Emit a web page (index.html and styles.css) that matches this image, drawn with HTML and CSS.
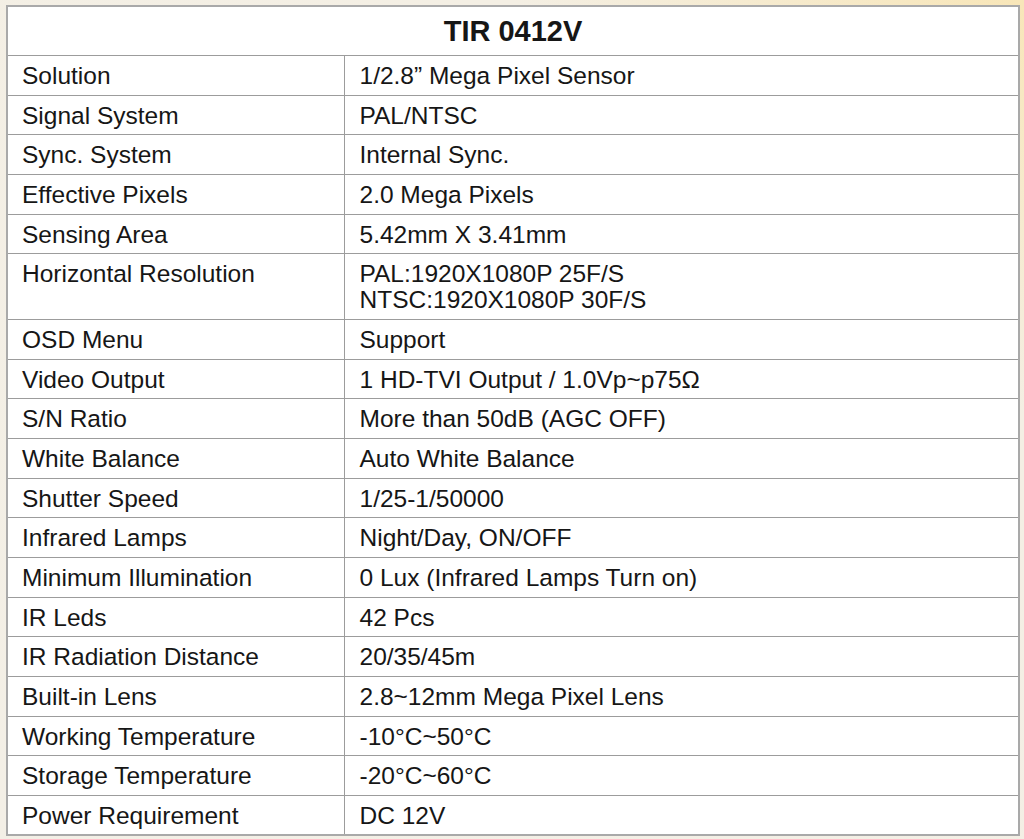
FILE: index.html
```html
<!DOCTYPE html>
<html>
<head>
<meta charset="utf-8">
<link rel="stylesheet" href="styles.css">
</head>
<body>
<div class="page">
<table class="spec">
<colgroup><col class="c-label"><col class="c-value"></colgroup>
<tr class="title-row"><th colspan="2">TIR 0412V</th></tr>
<tr><td>Solution</td><td>1/2.8” Mega Pixel Sensor</td></tr>
<tr><td>Signal System</td><td>PAL/NTSC</td></tr>
<tr><td>Sync. System</td><td>Internal Sync.</td></tr>
<tr><td>Effective Pixels</td><td>2.0 Mega Pixels</td></tr>
<tr><td>Sensing Area</td><td>5.42mm X 3.41mm</td></tr>
<tr class="double"><td>Horizontal Resolution</td><td>PAL:1920X1080P 25F/S<br>NTSC:1920X1080P 30F/S</td></tr>
<tr><td>OSD Menu</td><td>Support</td></tr>
<tr><td>Video Output</td><td>1 HD-TVI Output / 1.0Vp~p75Ω</td></tr>
<tr><td>S/N Ratio</td><td>More than 50dB (AGC OFF)</td></tr>
<tr><td>White Balance</td><td>Auto White Balance</td></tr>
<tr><td>Shutter Speed</td><td>1/25-1/50000</td></tr>
<tr><td>Infrared Lamps</td><td>Night/Day, ON/OFF</td></tr>
<tr><td>Minimum Illumination</td><td>0 Lux (Infrared Lamps Turn on)</td></tr>
<tr><td>IR Leds</td><td>42 Pcs</td></tr>
<tr><td>IR Radiation Distance</td><td>20/35/45m</td></tr>
<tr><td>Built-in Lens</td><td>2.8~12mm Mega Pixel Lens</td></tr>
<tr><td>Working Temperature</td><td>-10°C~50°C</td></tr>
<tr><td>Storage Temperature</td><td>-20°C~60°C</td></tr>
<tr><td>Power Requirement</td><td>DC 12V</td></tr>
</table>
</div>
</body>
</html>
```
FILE: styles.css
```css
html, body {
  margin: 0;
  padding: 0;
}
body {
  width: 1024px;
  height: 839px;
  overflow: hidden;
  background: linear-gradient(to bottom left, #f8e6b8 0%, #f4efe4 25%, #f3efe6 100%);
  font-family: "Liberation Sans", Arial, sans-serif;
  color: #161616;
}
.page {
  padding: 5px 0 0 6px;
}
.spec {
  width: 1014px;
  border-collapse: collapse;
  background: #fff;
  border: 2px solid #a9a9a9;
  table-layout: fixed;
}
.c-label {
  width: 337px;
}
.spec td, .spec th {
  border: 1px solid #9c9c9c;
  padding: 7px 0 5.67px 14px;
  font-size: 24.5px;
  line-height: 26px;
  font-weight: normal;
  text-align: left;
  vertical-align: top;
  height: 26px;
}
.spec td + td {
  padding-left: 15px;
}
.title-row th {
  height: 48px;
  padding: 0;
  text-align: center;
  vertical-align: middle;
  font-weight: bold;
  font-size: 29px;
}
.double td {
  height: 52px;
}
```
